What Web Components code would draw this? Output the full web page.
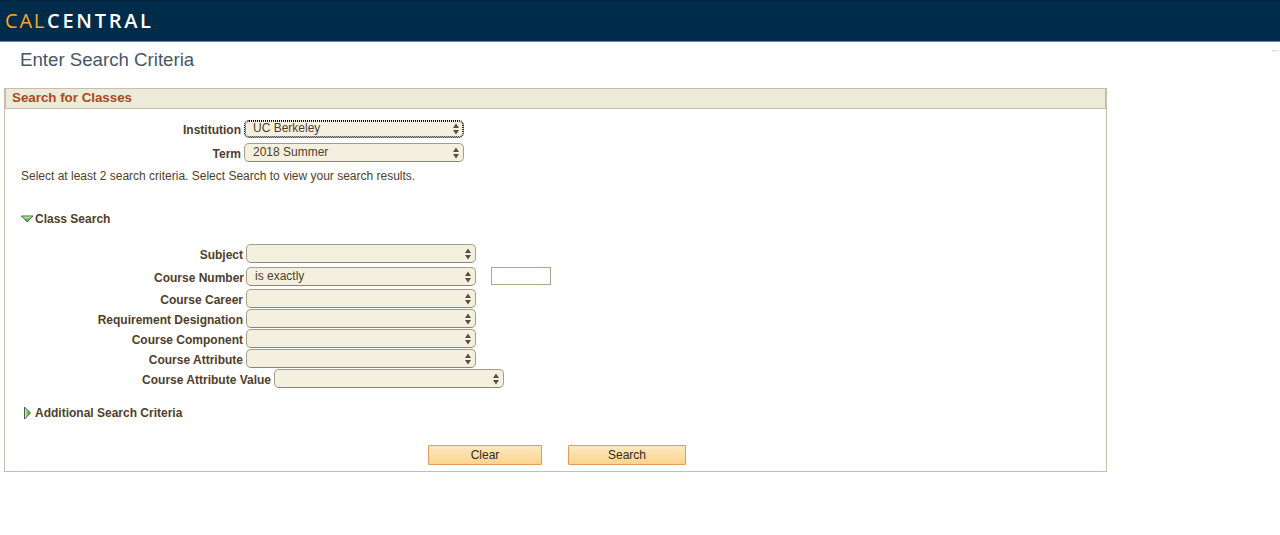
<!DOCTYPE html>
<html lang="en">
<head>
<meta charset="utf-8">
<title>Enter Search Criteria</title>
<style>
    html, body { margin: 0; background: #fff; }
    body { font: 12px "Liberation Sans", Arial, sans-serif; color: #4f3e2b; }
</style>
</head>
<body>
<cal-header></cal-header>
<page-title>Enter Search Criteria</page-title>
<search-panel heading="Search for Classes">
    <form-row label="Institution" label-width="236" gap="3" height="18" top="11">
        <cal-select value="UC Berkeley" width="220" focused></cal-select>
    </form-row>
    <form-row label="Term" label-width="236" gap="3" height="19" top="5">
        <cal-select value="2018 Summer" width="220"></cal-select>
    </form-row>
    <help-text>Select at least 2 search criteria. Select Search to view your search results.</help-text>
    <section-toggle open style="margin-top:29px">Class Search</section-toggle>
    <form-row label="Subject" label-width="238" gap="3" height="19" top="18">
        <cal-select width="230"></cal-select>
    </form-row>
    <form-row label="Course Number" label-width="239" gap="2" height="19" top="4">
        <cal-select value="is exactly" width="230"></cal-select>
        <cal-input></cal-input>
    </form-row>
    <form-row label="Course Career" label-width="238" gap="3" height="19" top="3">
        <cal-select width="230"></cal-select>
    </form-row>
    <form-row label="Requirement Designation" label-width="238" gap="3" height="19" top="1">
        <cal-select width="230"></cal-select>
    </form-row>
    <form-row label="Course Component" label-width="238" gap="3" height="19" top="1">
        <cal-select width="230"></cal-select>
    </form-row>
    <form-row label="Course Attribute" label-width="238" gap="3" height="19" top="1">
        <cal-select width="230"></cal-select>
    </form-row>
    <form-row label="Course Attribute Value" label-width="266" gap="3" height="19" top="1">
        <cal-select width="230"></cal-select>
    </form-row>
    <section-toggle style="margin-top:18px">Additional Search Criteria</section-toggle>
    <button-bar>
        <cal-button width="114">Clear</cal-button>
        <cal-button width="118">Search</cal-button>
    </button-bar>
</search-panel>
<script>
(function() {
    // small helper, every element below is just a template + a shadow root
    function makeTemplate(html) {
        const template = document.createElement('template');
        template.innerHTML = html;
        return template;
    }

    const headerTemplate = makeTemplate(`
<style>
    :host {
        display: flex;
        align-items: center;
        box-sizing: border-box;
        height: 42px;
        padding: 0 0 1px 5px;
        background: #002c4b;
        border-top: 1px solid #02233a;
        border-bottom: 1px solid #6c8aa6;
        font: 20px "Open Sans", sans-serif;
        letter-spacing: 1.8px;
        position: relative;
    }
    .cal { color: #f9a825; font-weight: 400; margin-right: 1px; }
    .central { color: #fff; font-weight: 600; letter-spacing: 2.7px; }
    .mark {
        position: absolute;
        top: 49px;
        left: 1272px;
        width: 7px;
        height: 2px;
        box-sizing: border-box;
        border-top: 1px solid #ecdfc4;
        border-left: 1px solid #ecdfc4;
    }
</style>
<span class="cal">CAL</span><span class="central">CENTRAL</span>
<span class="mark"></span>
`);

    class CalHeader extends HTMLElement {
        constructor() {
            super();
            this.attachShadow({mode: 'open'});
            this.shadowRoot.appendChild(headerTemplate.content.cloneNode(true));
        }
    }

    const titleTemplate = makeTemplate(`
<style>
    :host {
        display: block;
        padding: 7px 0 0 20px;
        height: 39px;
        box-sizing: border-box;
        font: 18.67px/21px "Liberation Sans", Arial, sans-serif;
        color: #465667;
    }
</style>
<slot></slot>
`);

    class PageTitle extends HTMLElement {
        constructor() {
            super();
            this.attachShadow({mode: 'open'});
            this.shadowRoot.appendChild(titleTemplate.content.cloneNode(true));
        }
    }

    const panelTemplate = makeTemplate(`
<style>
    :host {
        display: block;
        box-sizing: border-box;
        width: 1103px;
        height: 384px;
        margin: 7px 0 0 4px;
        border: 1px solid #c8bda8;
    }
    .heading {
        box-sizing: border-box;
        height: 20px;
        padding: 0 0 0 6px;
        background: #ecead9;
        border-bottom: 1px solid #c8bda8;
        border-right: 1px solid #c8bda8;
        border-left: 1px solid #c8bda8;
        font: bold 13.33px/17px "Liberation Sans", Arial, sans-serif;
        color: #a9491c;
    }
</style>
<div class="heading"></div>
<slot></slot>
`);

    class SearchPanel extends HTMLElement {
        constructor() {
            super();
            this.attachShadow({mode: 'open'});
            this.shadowRoot.appendChild(panelTemplate.content.cloneNode(true));
        }

        connectedCallback() {
            this.shadowRoot.querySelector('.heading').textContent = this.getAttribute('heading');
        }
    }

    const rowTemplate = makeTemplate(`
<style>
    :host {
        display: flex;
        align-items: center;
    }
    .label {
        box-sizing: border-box;
        text-align: right;
        font: bold 12px/14px "Liberation Sans", Arial, sans-serif;
        color: #4f3e2b;
        position: relative;
        top: 1px;
        white-space: nowrap;
    }
</style>
<div class="label"></div>
<slot></slot>
`);

    class FormRow extends HTMLElement {
        constructor() {
            super();
            this.attachShadow({mode: 'open'});
            this.shadowRoot.appendChild(rowTemplate.content.cloneNode(true));
        }

        connectedCallback() {
            const label = this.shadowRoot.querySelector('.label');
            label.textContent = this.getAttribute('label');
            label.style.width = this.getAttribute('label-width') + 'px';
            label.style.marginRight = this.getAttribute('gap') + 'px';
            this.style.height = this.getAttribute('height') + 'px';
            this.style.marginTop = this.getAttribute('top') + 'px';
        }
    }

    const selectTemplate = makeTemplate(`
<style>
    :host {
        display: block;
        box-sizing: border-box;
        height: 100%;
        flex: none;
        position: relative;
        background: #f4f0e0;
        border: 1px solid #a89c88;
        border-bottom-color: #8f8472;
        border-radius: 5px;
        font: 12px/15px "Liberation Sans", Arial, sans-serif;
        color: #4f3e2b;
    }
    :host([focused]) {
        border: 1px dotted #000;
        outline: 1px dotted #222;
        outline-offset: -2px;
    }
    .value {
        position: absolute;
        left: 8px;
        top: 1px;
        white-space: nowrap;
    }
    :host([focused]) .value { top: 0; }
    svg {
        position: absolute;
        right: 4px;
        top: 50%;
        margin-top: -6px;
    }
</style>
<span class="value"></span>
<svg width="6" height="12" viewBox="0 0 6 12"><path d="M3 0.5L6 5H0zM3 11.5L0 7H6z" fill="#5a4d3e"/></svg>
`);

    class CalSelect extends HTMLElement {
        constructor() {
            super();
            this.attachShadow({mode: 'open'});
            this.shadowRoot.appendChild(selectTemplate.content.cloneNode(true));
        }

        connectedCallback() {
            this.shadowRoot.querySelector('.value').textContent = this.getAttribute('value') || '';
            this.style.width = this.getAttribute('width') + 'px';
        }
    }

    const inputTemplate = makeTemplate(`
<style>
    :host {
        display: block;
        box-sizing: border-box;
        width: 60px;
        height: 18px;
        margin-left: 15px;
        align-self: flex-start;
        flex: none;
        background: #fff;
        border: 1px solid #b5a78f;
    }
</style>
`);

    class CalInput extends HTMLElement {
        constructor() {
            super();
            this.attachShadow({mode: 'open'});
            this.shadowRoot.appendChild(inputTemplate.content.cloneNode(true));
        }
    }

    const helpTemplate = makeTemplate(`
<style>
    :host {
        display: block;
        margin: 7px 0 0 16px;
        font: 12px/14px "Liberation Sans", Arial, sans-serif;
        color: #4f3e2b;
    }
</style>
<slot></slot>
`);

    class HelpText extends HTMLElement {
        constructor() {
            super();
            this.attachShadow({mode: 'open'});
            this.shadowRoot.appendChild(helpTemplate.content.cloneNode(true));
        }
    }

    const toggleTemplate = makeTemplate(`
<style>
    :host {
        display: flex;
        align-items: center;
        height: 14px;
        padding-left: 16px;
        font: bold 12px/14px "Liberation Sans", Arial, sans-serif;
        color: #4f3e2b;
    }
    .icon {
        width: 14px;
        height: 14px;
        flex: none;
    }
</style>
<svg class="icon" viewBox="0 0 14 14"></svg>
<slot></slot>
`);

    class SectionToggle extends HTMLElement {
        constructor() {
            super();
            this.attachShadow({mode: 'open'});
            this.shadowRoot.appendChild(toggleTemplate.content.cloneNode(true));
        }

        connectedCallback() {
            // open = pointing down, closed = pointing right
            const open = this.hasAttribute('open');
            const points = open ? '0.5,4 12,4 6.25,10' : '3.5,1 9.5,7 3.5,13';
            const axis = open ? 'x1="0" y1="0" x2="0" y2="1"' : 'x1="0" y1="0" x2="1" y2="0"';
            this.shadowRoot.querySelector('.icon').innerHTML =
                '<defs><linearGradient id="fade" ' + axis + '>' +
                '<stop offset="0" stop-color="#e4f5dc"/><stop offset="0.6" stop-color="#5fc043"/></linearGradient></defs>' +
                '<polygon points="' + points + '" fill="url(#fade)" stroke="#35503a" stroke-width="0.9"/>';
        }
    }

    const barTemplate = makeTemplate(`
<style>
    :host {
        display: flex;
        gap: 26px;
        margin: 25px 0 0 423px;
    }
</style>
<slot></slot>
`);

    class ButtonBar extends HTMLElement {
        constructor() {
            super();
            this.attachShadow({mode: 'open'});
            this.shadowRoot.appendChild(barTemplate.content.cloneNode(true));
        }
    }

    const buttonTemplate = makeTemplate(`
<style>
    :host {
        display: block;
        box-sizing: border-box;
        height: 20px;
        text-align: center;
        background: linear-gradient(#fde8c0, #fbd48e);
        border: 1px solid #e09a62;
        border-radius: 1px;
        font: 12px/18px "Liberation Sans", Arial, sans-serif;
        color: #2f2a22;
    }
</style>
<slot></slot>
`);

    class CalButton extends HTMLElement {
        constructor() {
            super();
            this.attachShadow({mode: 'open'});
            this.shadowRoot.appendChild(buttonTemplate.content.cloneNode(true));
        }

        connectedCallback() {
            this.style.width = this.getAttribute('width') + 'px';
        }
    }

    customElements.define('cal-header', CalHeader);
    customElements.define('page-title', PageTitle);
    customElements.define('search-panel', SearchPanel);
    customElements.define('form-row', FormRow);
    customElements.define('cal-select', CalSelect);
    customElements.define('cal-input', CalInput);
    customElements.define('help-text', HelpText);
    customElements.define('section-toggle', SectionToggle);
    customElements.define('button-bar', ButtonBar);
    customElements.define('cal-button', CalButton);
})();
</script>
</body>
</html>
